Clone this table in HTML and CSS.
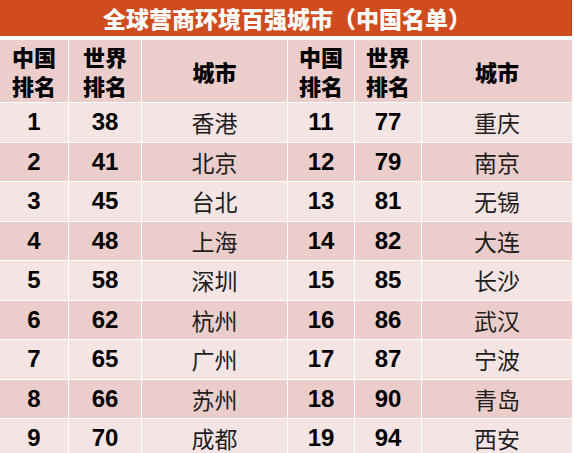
FILE: index.html
```html
<!DOCTYPE html>
<html lang="zh">
<head>
<meta charset="utf-8">
<link rel="stylesheet" href="styles.css">
</head>
<body>
<div class="sheet">
  <div class="title">全球营商环境百强城市（中国名单）</div>
  <div class="grid">
    <div class="cell head">中国<br>排名</div>
    <div class="cell head">世界<br>排名</div>
    <div class="cell head">城市</div>
    <div class="cell head">中国<br>排名</div>
    <div class="cell head">世界<br>排名</div>
    <div class="cell head">城市</div>

    <div class="cell odd num">1</div><div class="cell odd num">38</div><div class="cell odd city">香港</div><div class="cell odd num">11</div><div class="cell odd num">77</div><div class="cell odd city">重庆</div>
    <div class="cell even num">2</div><div class="cell even num">41</div><div class="cell even city">北京</div><div class="cell even num">12</div><div class="cell even num">79</div><div class="cell even city">南京</div>
    <div class="cell odd num">3</div><div class="cell odd num">45</div><div class="cell odd city">台北</div><div class="cell odd num">13</div><div class="cell odd num">81</div><div class="cell odd city">无锡</div>
    <div class="cell even num">4</div><div class="cell even num">48</div><div class="cell even city">上海</div><div class="cell even num">14</div><div class="cell even num">82</div><div class="cell even city">大连</div>
    <div class="cell odd num">5</div><div class="cell odd num">58</div><div class="cell odd city">深圳</div><div class="cell odd num">15</div><div class="cell odd num">85</div><div class="cell odd city">长沙</div>
    <div class="cell even num">6</div><div class="cell even num">62</div><div class="cell even city">杭州</div><div class="cell even num">16</div><div class="cell even num">86</div><div class="cell even city">武汉</div>
    <div class="cell odd num">7</div><div class="cell odd num">65</div><div class="cell odd city">广州</div><div class="cell odd num">17</div><div class="cell odd num">87</div><div class="cell odd city">宁波</div>
    <div class="cell even num">8</div><div class="cell even num">66</div><div class="cell even city">苏州</div><div class="cell even num">18</div><div class="cell even num">90</div><div class="cell even city">青岛</div>
    <div class="cell odd num">9</div><div class="cell odd num">70</div><div class="cell odd city">成都</div><div class="cell odd num">19</div><div class="cell odd num">94</div><div class="cell odd city">西安</div>
  </div>
</div>
</body>
</html>
```

FILE: styles.css
```css
html, body {
  margin: 0;
  padding: 0;
  background: #ffffff;
}
body {
  width: 575px;
  height: 453px;
  overflow: hidden;
  font-family: "Noto Sans CJK SC", sans-serif;
}
.sheet {
  width: 572px;
}
.title {
  height: 36px;
  background: #d04b1d;
  color: #ffffff;
  font-weight: 900;
  font-size: 23px;
  line-height: 36px;
  text-align: center;
  padding-left: 2px;
  margin-bottom: 4px;
  box-shadow: inset -1px 0 0 #b8401a;
}
.grid {
  display: grid;
  grid-template-columns: 68px 72px 145px 66px 66px 150px;
  grid-template-rows: 62px repeat(9, 38.5px);
  column-gap: 1px;
  row-gap: 1px;
}
.cell {
  display: flex;
  align-items: center;
  justify-content: center;
  text-align: center;
  color: #111111;
}
.head {
  background: #ebcdcb;
  font-weight: 900;
  font-size: 22px;
  line-height: 29px;
  color: #000000;
}
.odd {
  background: #f4e5e4;
}
.even {
  background: #ebcecc;
}
.num {
  font-family: "Liberation Sans", Arial, sans-serif;
  font-weight: 700;
  font-size: 24px;
  color: #000000;
}
.city {
  font-size: 23px;
  color: #1e1e1e;
}
```
